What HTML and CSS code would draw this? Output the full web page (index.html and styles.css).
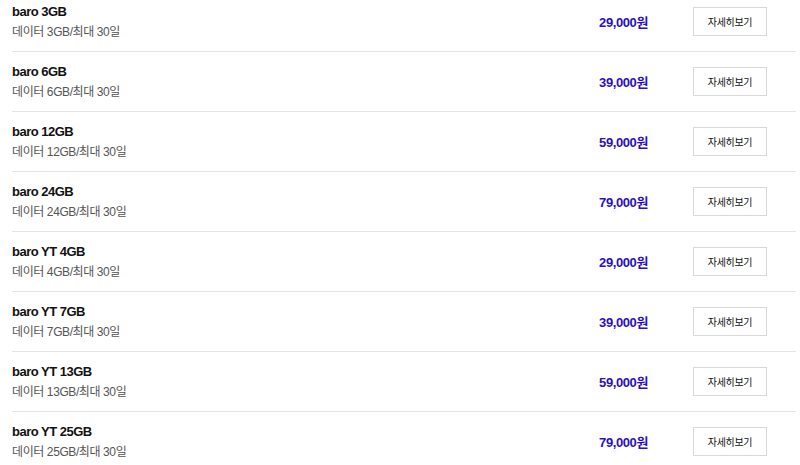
FILE: index.html
```html
<!DOCTYPE html>
<html lang="ko">
<head>
<meta charset="utf-8">
<title>요금제 목록</title>
<link rel="stylesheet" href="styles.css">
</head>
<body>
<ul class="plan-list">
  <li class="plan">
    <div class="plan-info">
      <div class="plan-name">baro 3GB</div>
      <div class="plan-desc">데이터 3GB/최대 30일</div>
    </div>
    <div class="plan-price">29,000원</div>
    <button class="plan-btn">자세히보기</button>
  </li>
  <li class="plan">
    <div class="plan-info">
      <div class="plan-name">baro 6GB</div>
      <div class="plan-desc">데이터 6GB/최대 30일</div>
    </div>
    <div class="plan-price">39,000원</div>
    <button class="plan-btn">자세히보기</button>
  </li>
  <li class="plan">
    <div class="plan-info">
      <div class="plan-name">baro 12GB</div>
      <div class="plan-desc">데이터 12GB/최대 30일</div>
    </div>
    <div class="plan-price">59,000원</div>
    <button class="plan-btn">자세히보기</button>
  </li>
  <li class="plan">
    <div class="plan-info">
      <div class="plan-name">baro 24GB</div>
      <div class="plan-desc">데이터 24GB/최대 30일</div>
    </div>
    <div class="plan-price">79,000원</div>
    <button class="plan-btn">자세히보기</button>
  </li>
  <li class="plan">
    <div class="plan-info">
      <div class="plan-name">baro YT 4GB</div>
      <div class="plan-desc">데이터 4GB/최대 30일</div>
    </div>
    <div class="plan-price">29,000원</div>
    <button class="plan-btn">자세히보기</button>
  </li>
  <li class="plan">
    <div class="plan-info">
      <div class="plan-name">baro YT 7GB</div>
      <div class="plan-desc">데이터 7GB/최대 30일</div>
    </div>
    <div class="plan-price">39,000원</div>
    <button class="plan-btn">자세히보기</button>
  </li>
  <li class="plan">
    <div class="plan-info">
      <div class="plan-name">baro YT 13GB</div>
      <div class="plan-desc">데이터 13GB/최대 30일</div>
    </div>
    <div class="plan-price">59,000원</div>
    <button class="plan-btn">자세히보기</button>
  </li>
  <li class="plan">
    <div class="plan-info">
      <div class="plan-name">baro YT 25GB</div>
      <div class="plan-desc">데이터 25GB/최대 30일</div>
    </div>
    <div class="plan-price">79,000원</div>
    <button class="plan-btn">자세히보기</button>
  </li>
</ul>
</body>
</html>
```
FILE: styles.css
```css
html, body {
  margin: 0;
  padding: 0;
  background: #fff;
}
body {
  font-family: "Liberation Sans", "Noto Sans CJK KR", sans-serif;
  color: #111;
}
.plan-list {
  list-style: none;
  margin: -8px 4px 0 12px;
  padding: 0;
}
.plan {
  display: flex;
  align-items: center;
  padding: 9px 0;
  border-bottom: 1px solid #e4e4e4;
}
.plan-info {
  flex: 1;
  min-width: 0;
}
.plan-name {
  font-size: 13px;
  font-weight: bold;
  line-height: 21px;
  letter-spacing: -0.5px;
  color: #111;
}
.plan-desc {
  font-size: 12px;
  line-height: 20px;
  letter-spacing: -0.4px;
  color: #555;
}
.plan-price {
  font-size: 13px;
  font-weight: bold;
  letter-spacing: -0.4px;
  color: #2a10c0;
  text-align: right;
}
.plan-btn {
  margin: 0 29px 0 45px;
  width: 74px;
  height: 29px;
  padding: 0;
  border: 1px solid #d9d9d9;
  background: #fff;
  font-family: "Noto Sans CJK KR", sans-serif;
  font-size: 10px;
  letter-spacing: -0.3px;
  color: #111;
  cursor: pointer;
}
```
